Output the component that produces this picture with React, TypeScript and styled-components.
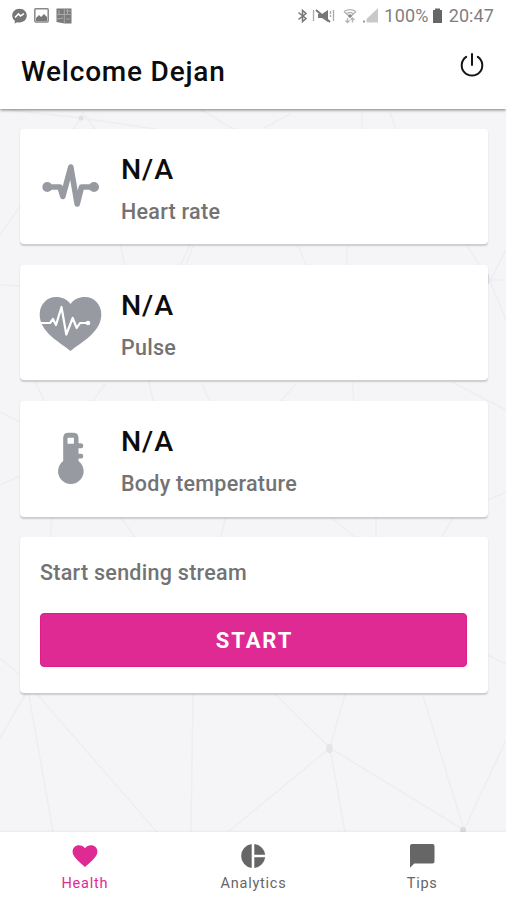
import React from "react";
import styled, { createGlobalStyle } from "styled-components";

const GlobalStyle = createGlobalStyle`
  * { box-sizing: border-box; }
  html, body { margin: 0; background: #f5f5f8; }
  body { font-family: Roboto, "Liberation Sans", sans-serif; }
`;

const Screen = styled.div`
  position: relative;
  display: flex;
  flex-direction: column;
  width: 506px;
  height: 900px;
  overflow: hidden;
  background: #f5f5f8;
`;

const Backdrop = styled.svg`
  position: absolute;
  inset: 0;
  fill: none;
  stroke: #eeeef0;
  stroke-width: 1.5;
`;

const Header = styled.header`
  position: relative;
  flex: none;
  height: 109px;
  background: #fff;
  box-shadow: 0 1px 3px rgba(0, 0, 0, 0.5);
`;

const StatusBar = styled.div`
  display: flex;
  align-items: center;
  justify-content: space-between;
  height: 31px;
  padding: 0 12px;
  color: #7f7f7f;
`;

const StatusGroup = styled.div`
  display: flex;
  align-items: center;
`;

const StatusText = styled.span<{ $spacing: number }>`
  font-size: 18px;
  line-height: 22px;
  letter-spacing: ${(p) => p.$spacing}px;
`;

const TitleBar = styled.div`
  display: flex;
  justify-content: space-between;
  padding: 20px 22px 0 21px;
`;

const Title = styled.h1`
  margin: 1px 0 0;
  font-size: 28px;
  font-weight: 500;
  line-height: 40px;
  letter-spacing: 0.8px;
  color: #0c0c0c;
`;

const PowerButton = styled.button`
  width: 24px;
  height: 26px;
  margin: 0;
  padding: 0;
  border: 0;
  background: none;
`;

const Content = styled.main`
  position: relative;
  flex: 1;
  display: flex;
  flex-direction: column;
  gap: 20.4px;
  padding: 19.5px 18.5px 0 20px;
`;

const Card = styled.section`
  background: #fff;
  border-radius: 4px;
  box-shadow: 0 1.5px 1.5px rgba(0, 0, 0, 0.17);
`;

const MetricCard = styled(Card)`
  display: flex;
  height: 115.8px;
`;

const MetricIcon = styled.svg`
  flex: none;
  width: 101px;
  height: 116px;
  color: #989aa2;
`;

const MetricText = styled.div`
  padding-top: 21px;
`;

const Value = styled.div`
  font-size: 28.5px;
  font-weight: 500;
  line-height: 40px;
  letter-spacing: 0.9px;
  color: #0c0c0c;
`;

const Label = styled.div`
  font-size: 21.5px;
  font-weight: 500;
  line-height: 30px;
  letter-spacing: 0.27px;
  color: #737373;
`;

const MetricLabel = styled(Label)`
  margin-top: 7px;
`;

const StreamCard = styled(Card)`
  height: 156px;
  padding: 21px 20px 0;
`;

const StartButton = styled.button`
  display: block;
  width: 427px;
  height: 54px;
  margin-top: 25px;
  padding: 2px 0 0 2px;
  border: 1px solid #df1c8b;
  border-radius: 4px;
  background: #df2a93;
  color: #fff;
  font: 700 22px/30px Roboto, "Liberation Sans", sans-serif;
  letter-spacing: 1.9px;
`;

const TabBar = styled.nav`
  position: relative;
  display: grid;
  grid-template-columns: repeat(3, 1fr);
  flex: none;
  height: 68px;
  background: #fff;
  box-shadow: 0 -1px 2px rgba(0, 0, 0, 0.05);
`;

const Tab = styled.button<{ $active?: boolean }>`
  display: flex;
  flex-direction: column;
  align-items: center;
  gap: 5px;
  padding: 11px 0 0 1px;
  border: 0;
  background: none;
  color: ${(p) => (p.$active ? "#df2a93" : "#666")};
  font: 400 14.5px/20px Roboto, "Liberation Sans", sans-serif;
  letter-spacing: 0.75px;
`;

const Icon = styled.svg<{ $gap?: number }>`
  display: block;
  flex: none;
  margin-right: ${(p) => p.$gap ?? 0}px;
`;

const HeartRateIcon = () => (
  <MetricIcon viewBox="0 0 101 116" fill="none" stroke="currentColor" strokeWidth="5.6" strokeLinecap="round" strokeLinejoin="round">
    <path d="M27 58H40L42.800 67.500L50.800 38L57.200 75L61.500 58H74" />
    <g fill="currentColor" stroke="none">
      <circle cx="27.3" cy="58" r="5" />
      <circle cx="74" cy="58" r="5" />
    </g>
  </MetricIcon>
);

const PulseIcon = () => (
  <MetricIcon viewBox="0 0 101 116" fill="none">
    <path fill="currentColor" d="M50.5 86C46 82 37 76.500 31.500 71.500C24 64.500 19.700 58 19.700 49.500C19.700 39.200 27 32 36 32C42 32 47.500 34.500 50.500 39C53.500 34.500 59 32 65 32C74 32 81.300 39.200 81.300 49.500C81.300 58 77 64.500 69.500 71.500C64 76.500 55 82 50.500 86Z" />
    <path stroke="#fff" strokeWidth="2.2" strokeLinecap="round" strokeLinejoin="round" d="M20 58H30L33 54L36 60L41.5 42L46.3 69.5L52.7 53L56.7 63L60 58H67.5" />
    <circle cx="68" cy="58" r="2.3" fill="#fff" />
  </MetricIcon>
);

const ThermometerIcon = () => (
  <MetricIcon viewBox="0 0 101 116" fill="currentColor">
    <path fillRule="evenodd" d="M43.2 37Q43.2 31.8 48.4 31.8H53.3Q58.5 31.8 58.5 37V42.2H61Q63.3 42.2 63.3 44.7T61 47.2H58.5V52.8H61Q63.3 52.8 63.3 55.2T61 57.6H58.5V60A12.8 12.8 0 1 1 43.2 60ZM47.5 36.8V42.8H53.9V36.8Z" />
  </MetricIcon>
);

const metrics = [
  { label: "Heart rate", Glyph: HeartRateIcon },
  { label: "Pulse", Glyph: PulseIcon },
  { label: "Body temperature", Glyph: ThermometerIcon },
];

export default function App() {
  return (
    <>
      <GlobalStyle />
      <Screen>
        <Backdrop viewBox="0 0 506 900" width="506" height="900">
          <path d="M81 118L10 110M81 118L155 129M81 118L0 235M264 128L290 114M362 112V130M390 112L396 130M82 112L100 135M200 109L235 130M0 285L20 286M120 243L155 410M190 244L170 290M298 246L307 267M347 246V267M466 244L490 281L506 250M490 280H506M490 281L506 320M35 382L45 402M105 384L92 402M202 384L210 402M296 384L280 402M352 382L354 402M452 382L506 410M0 412L20 422M0 485L20 476M52 516L50 540M120 516L137 540M226 516L220 540M330 516L358 540M376 516V540M454 516L440 540M488 500L506 492M0 658L20 675M488 655L506 664M28 690L0 738M28 690L53 832M35 692L157 832M193 694L191 832M275 694L330 748L345 694M330 748L228 832M330 748L345 832M330 748L464 830L423 696M464 830L506 740M193 246L184 270" />
          <ellipse cx="329.5" cy="748.5" rx="3.4" ry="4.8" fill="#e4e5e8" stroke="none" />
          <circle cx="81" cy="118" r="2.5" fill="#e0e1e4" stroke="none" />
          <circle cx="463" cy="830" r="3" fill="#d9dadd" stroke="none" />
          <ellipse cx="488" cy="279" rx="1.5" ry="5" fill="#dcdde0" stroke="none" />
        </Backdrop>

        <Header>
          <StatusBar>
            <StatusGroup>
              <Icon $gap={7} width="15" height="16" viewBox="0 0 15 16">
                <path fill="#777" d="M7.5 0.8C3.3 .8.2 3.7.2 7.6c0 2.1 1 4 2.6 5.2v2.8l2.5-1.4c.7.2 1.4.3 2.2.3 4.2 0 7.3-3 7.3-6.9S11.700.8 7.500.8Z" />
                <path fill="none" stroke="#fff" strokeWidth="1.6" d="M3 9.500L6.500 6L8.500 8L12 5.700" />
              </Icon>
              <Icon $gap={7} width="15" height="15" viewBox="0 0 15 15">
                <rect x="0.800" y="0.800" width="13.400" height="13.200" rx="1" fill="none" stroke="#888" strokeWidth="1.500" />
                <path fill="#777" d="M2 10L5 7L7 9L10 6L13 9V13H2Z" />
              </Icon>
              <Icon width="16" height="16" viewBox="0 0 16 16">
                <path fill="#7b7b7b" d="M.5.5H15.500V15.500H8.500L.5 14Z" />
                <path stroke="#b0b0b0" strokeWidth="0.9" d="M8.300 0V15M0 6.500H16M10 3H15M11.500 0V6M1 11L7 10M10 11H14M3 2V6" />
              </Icon>
            </StatusGroup>
            <StatusGroup>
              <Icon $gap={4} width="11" height="16" viewBox="0 0 11 16" fill="none" stroke="#777" strokeWidth="1.500">
                <path d="M1.500 4.500L9 10.500L5.500 13.500V2.500L9 5.500L1.500 11.500" />
              </Icon>
              <Icon $gap={8} width="23" height="16" viewBox="0 0 23 16">
                <path fill="#777" d="M6 6H10L16 2V14L10 10H6Z" />
                <path fill="none" stroke="#777" strokeWidth="2" d="M4 2L18 14" />
                <path fill="none" stroke="#aaa" strokeWidth="1.300" d="M1.500 2V13M21.500 2V13" />
                <path fill="none" stroke="#aaa" strokeWidth="1.300" strokeDasharray="3 1" d="M18.500 3V9" />
              </Icon>
              <Icon $gap={6} width="14" height="16" viewBox="0 0 14 16" fill="none" stroke="#b4b4b4" strokeWidth="1.300">
                <path d="M1 3.500Q7-.2 13 3.500M3 6Q7 3 11 6M1 3.500L7 9L13 3.500M4.500 10V14.500M9.500 10V14.500M2.500 12.500L4.500 14.500L6.500 12.500M7.500 12L9.500 10L11.500 12" />
                <circle cx="7" cy="8" r="1.700" fill="#888" stroke="none" />
              </Icon>
              <Icon $gap={6} width="15" height="15" viewBox="0 0 15 15" fill="#c9c9c9">
                <path d="M15 0V14.500H3.500V11Z" />
                <path fill="#999" d="M0 12.500H2V14.500H0Z" />
              </Icon>
              <StatusText $spacing={0.2}>100%</StatusText>
              <Icon $gap={5} width="15" height="16" viewBox="0 0 15 16" fill="#666">
                <path d="M6 .5H11V2H13V15H4V2H6Z" />
              </Icon>
              <StatusText $spacing={0.1}>20:47</StatusText>
            </StatusGroup>
          </StatusBar>
          <TitleBar>
            <Title>Welcome Dejan</Title>
            <PowerButton aria-label="Log out">
              <Icon width="24" height="26" viewBox="0 0 24 26" fill="none" stroke="#151515" strokeWidth="2" strokeLinecap="round">
                <path d="M12 3V14M6.200 5.800A10.300 10.300 0 1 0 17.800 5.800" />
              </Icon>
            </PowerButton>
          </TitleBar>
        </Header>

        <Content>
          {metrics.map(({ label, Glyph }) => (
            <MetricCard key={label}>
              <Glyph />
              <MetricText>
                <Value>N/A</Value>
                <MetricLabel>{label}</MetricLabel>
              </MetricText>
            </MetricCard>
          ))}
          <StreamCard>
            <Label>Start sending stream</Label>
            <StartButton>START</StartButton>
          </StreamCard>
        </Content>

        <TabBar>
          <Tab $active>
            <Icon width="26" height="26" viewBox="0 0 26 26" fill="currentColor">
              <path d="M13 24L11 22.200C4.500 16.400.6 13 .6 8.500C.6 4.900 3.400 2.200 7 2.200C9.400 2.200 11.600 3.400 13 5.200C14.400 3.400 16.600 2.200 19 2.200C22.600 2.200 25.400 4.900 25.400 8.500C25.400 13 21.500 16.400 15 22.200Z" />
            </Icon>
            Health
          </Tab>
          <Tab>
            <Icon width="26" height="26" viewBox="0 0 26 26" fill="currentColor">
              <path d="M11.700 1V25A12.100 12.100 0 0 1 11.700 1ZM14.300 1A12.200 12.200 0 0 1 25.200 11.700H14.300ZM14.300 14.300H25.200A12.200 12.200 0 0 1 14.300 25Z" />
            </Icon>
            Analytics
          </Tab>
          <Tab>
            <Icon width="26" height="26" viewBox="0 0 26 26" fill="currentColor">
              <path d="M3 1H23.500Q25.500 1 25.500 3V18.500Q25.500 20.500 23.500 20.500H5.300L1 24.800V3Q1 1 3 1Z" />
            </Icon>
            Tips
          </Tab>
        </TabBar>
      </Screen>
    </>
  );
}
